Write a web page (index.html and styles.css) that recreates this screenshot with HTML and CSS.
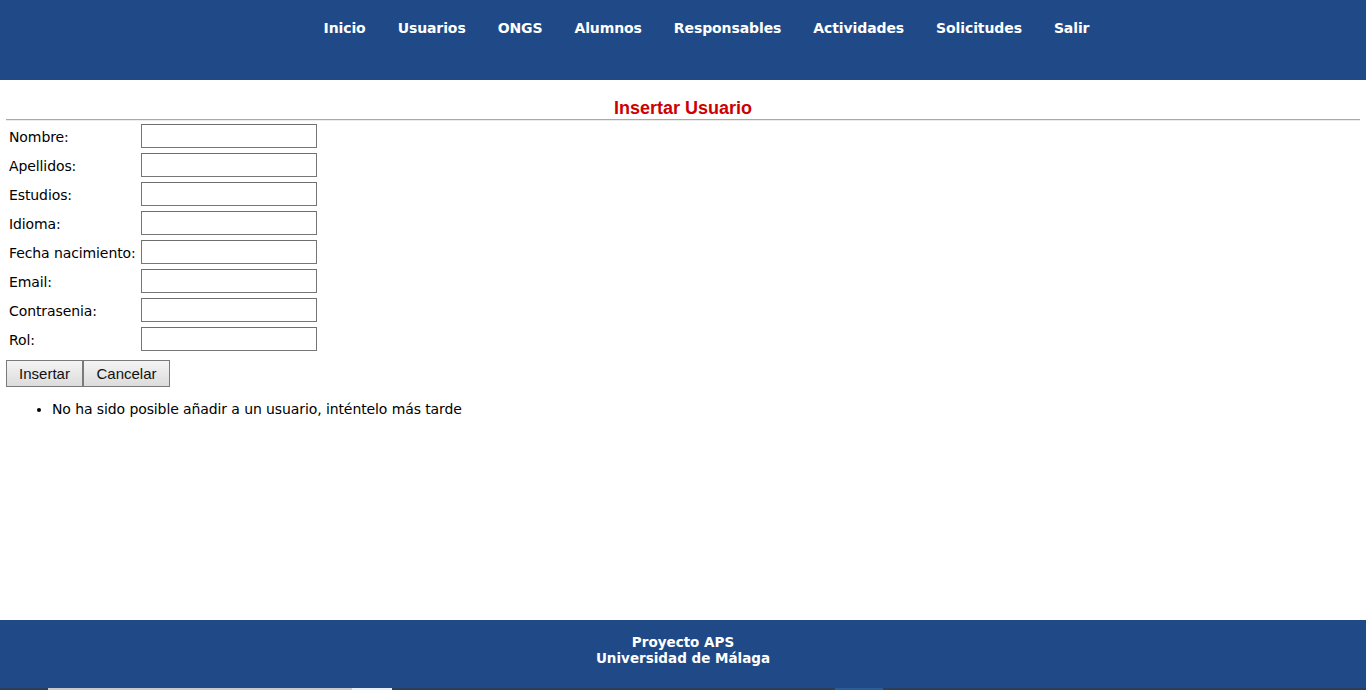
FILE: index.html
```html
<!DOCTYPE html>
<html lang="es">
<head>
<meta charset="utf-8">
<title>Insertar Usuario</title>
<link rel="stylesheet" href="styles.css">
</head>
<body>
<header class="topbar">
  <nav class="menu">
    <a href="#">Inicio</a>
    <a href="#">Usuarios</a>
    <a href="#">ONGS</a>
    <a href="#">Alumnos</a>
    <a href="#">Responsables</a>
    <a href="#">Actividades</a>
    <a href="#">Solicitudes</a>
    <a href="#">Salir</a>
  </nav>
</header>
<main class="content">
  <h1 class="title">Insertar Usuario</h1>
  <hr class="rule">
  <form class="form">
    <div class="fields">
      <label>Nombre:</label><input type="text">
      <label>Apellidos:</label><input type="text">
      <label>Estudios:</label><input type="text">
      <label>Idioma:</label><input type="text">
      <label>Fecha nacimiento:</label><input type="text">
      <label>Email:</label><input type="text">
      <label>Contrasenia:</label><input type="text">
      <label>Rol:</label><input type="text">
    </div>
    <div class="buttons">
      <button type="button">Insertar</button><button type="button">Cancelar</button>
    </div>
  </form>
  <ul class="errors">
    <li>No ha sido posible añadir a un usuario, inténtelo más tarde</li>
  </ul>
</main>
<footer class="footer">
  <p>Proyecto APS<br>Universidad de Málaga</p>
</footer>
<div class="strip">
  <span class="s-dark s1"></span><span class="s-light"></span><span class="s-pale"></span><span class="s-dark s2"></span><span class="s-blue"></span><span class="s-dark s3"></span>
</div>
</body>
</html>
```

FILE: styles.css
```css
html, body {
  margin: 0;
  padding: 0;
  background: #ffffff;
}
body {
  font-family: "DejaVu Sans", Verdana, sans-serif;
  color: #000;
  height: 690px;
  display: flex;
  flex-direction: column;
  overflow: hidden;
}
.topbar {
  background: #204a87;
  height: 80px;
  flex: none;
}
.menu {
  display: flex;
  justify-content: center;
  gap: 32px;
  padding: 19px 0 0 47px;
}
.menu a {
  color: #ffffff;
  text-decoration: none;
  font-weight: bold;
  font-size: 14px;
  line-height: 18px;
  letter-spacing: -0.1px;
}
.content {
  flex: 1;
  padding: 0 6px;
}
.title {
  margin: 17px 0 0;
  text-align: center;
  color: #cc0000;
  font-family: "Liberation Sans", Arial, sans-serif;
  font-size: 18px;
  line-height: 22px;
  font-weight: bold;
}
.rule {
  margin: 0;
  border: 0;
  border-top: 1px solid #a9a9a9;
  border-bottom: 1px solid #ececec;
  height: 0;
}
.form {
  margin: 3px 0 0;
}
.fields {
  display: grid;
  grid-template-columns: 135px 176px;
  row-gap: 5px;
  align-items: center;
}
.fields label {
  padding-left: 3px;
  padding-top: 1px;
  font-size: 14px;
  letter-spacing: -0.1px;
  white-space: nowrap;
}
.fields input {
  box-sizing: border-box;
  width: 176px;
  height: 24px;
  margin: 0;
  border: 1px solid #767676;
  border-top-color: #6e6e6e;
  background: #fff;
}
.buttons {
  display: flex;
  margin-top: 9px;
}
.buttons button {
  height: 27px;
  padding: 0 11px;
  font-family: "Liberation Sans", Arial, sans-serif;
  font-size: 15px;
  color: #111;
  background: linear-gradient(#f4f4f4, #dcdcdc);
  border: 1px solid #7a7a7a;
  border-radius: 0;
  margin: 0;
}
.buttons button:first-child {
  width: 77px;
}
.buttons button:last-child {
  width: 87px;
}
.errors {
  margin: 13px 0 0;
  padding-left: 46px;
  font-size: 14px;
  letter-spacing: -0.1px;
  line-height: 18px;
}
.footer {
  flex: none;
  height: 68px;
  background: #204a87;
  color: #ffffff;
  text-align: center;
}
.footer p {
  margin: 0;
  padding-top: 14px;
  font-weight: bold;
  font-size: 13.5px;
  line-height: 16px;
}
.strip {
  flex: none;
  height: 2px;
  display: flex;
}
.strip span {
  display: block;
  height: 2px;
}
.s-dark { background: #2b3f59; }
.s1 { width: 48px; }
.s-light { width: 304px; background: #c9c9c9; }
.s-pale { width: 40px; background: #e9eef4; }
.s2 { width: 443px; }
.s-blue { width: 48px; background: #2a5c9c; }
.s3 { flex: 1; }
```
